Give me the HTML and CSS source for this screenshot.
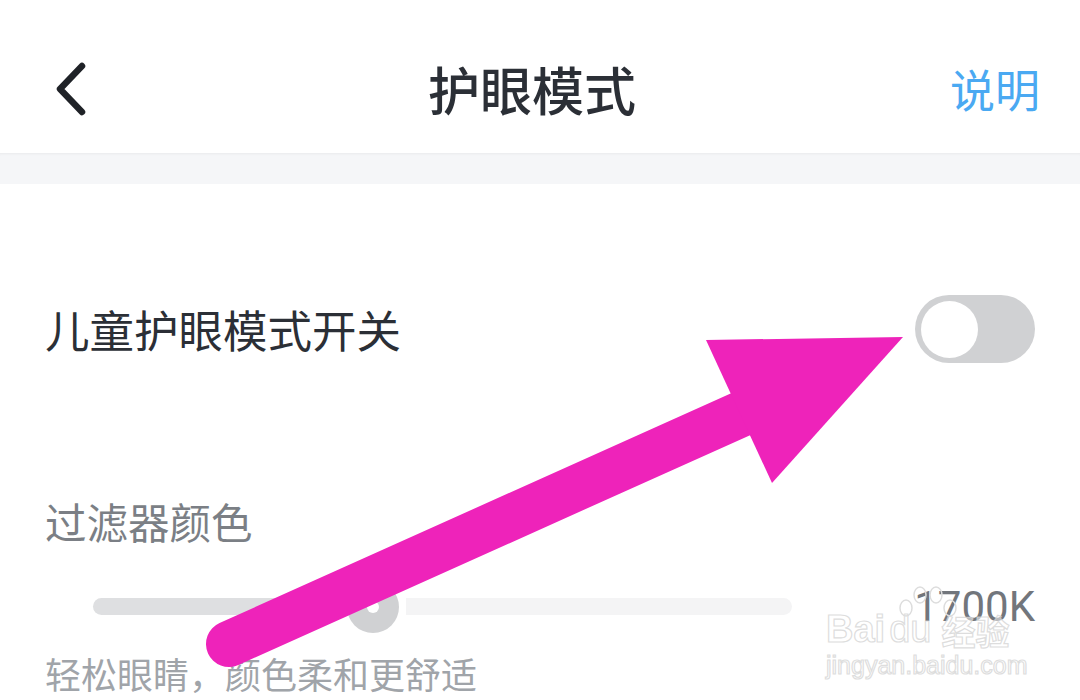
FILE: index.html
```html
<!DOCTYPE html>
<html lang="zh-CN">
<head>
    <meta charset="UTF-8">
    <title>护眼模式</title>
    <link rel="stylesheet" href="styles.css">
</head>
<body>
    <div class="page">
        <header class="top-bar">
            <div class="back">
                <svg width="40" height="56" viewBox="0 0 40 56">
                    <polyline points="32,5 10,28 32,51" fill="none" stroke="#1f2227" stroke-width="6.5" stroke-linecap="round" stroke-linejoin="round"/>
                </svg>
            </div>
            <h1 class="title">护眼模式</h1>
            <a class="help">说明</a>
        </header>
        <div class="divider"></div>

        <main class="content">
            <div class="switch-row">
                <span class="switch-label">儿童护眼模式开关</span>
                <div class="toggle"><div class="toggle-knob"></div></div>
            </div>

            <div class="filter-label">过滤器颜色</div>

            <div class="slider-row">
                <div class="slider">
                    <div class="slider-fill"></div>
                    <div class="slider-knob"></div>
                    <div class="slider-rest"></div>
                </div>
                <span class="slider-value">1700K</span>
            </div>

            <p class="hint">轻松眼睛，颜色柔和更舒适</p>
        </main>

        <div class="watermark">
            <div class="wm-main">
                <span>Bai</span>
                <span class="wm-paw">
                    <svg width="64" height="34" viewBox="0 0 64 34">
                        <ellipse cx="12" cy="22" rx="6" ry="8" fill="none" stroke="#dddddd" stroke-width="1.5"/>
                        <ellipse cx="26" cy="9" rx="6" ry="8" fill="none" stroke="#dddddd" stroke-width="1.5"/>
                        <ellipse cx="42" cy="9" rx="6" ry="8" fill="none" stroke="#dddddd" stroke-width="1.5"/>
                        <ellipse cx="56" cy="22" rx="6" ry="8" fill="none" stroke="#dddddd" stroke-width="1.5"/>
                    </svg>
                </span>
                <span class="wm-du">du</span>
                <span class="wm-cn">经验</span>
            </div>
            <div class="wm-url">jingyan.baidu.com</div>
        </div>

        <svg class="arrow" width="1080" height="700" viewBox="0 0 1080 700">
            <line x1="229" y1="644" x2="790" y2="392" stroke="#ee23ba" stroke-width="46" stroke-linecap="round"/>
            <polygon points="706,340 903,337 772,483" fill="#ee23ba"/>
        </svg>
    </div>
</body>
</html>
```

FILE: styles.css
```css
* {
    margin: 0;
    padding: 0;
    box-sizing: border-box;
}

body {
    font-family: "Noto Sans CJK SC", "Noto Sans", sans-serif;
    background-color: #ffffff;
    width: 1080px;
    height: 700px;
    overflow: hidden;
}

.page {
    position: relative;
    width: 1080px;
    height: 700px;
}

.top-bar {
    height: 153px;
    padding: 24px 40px 0 50px;
    display: flex;
    align-items: center;
    justify-content: space-between;
    background-color: #ffffff;
}

.back {
    width: 40px;
    height: 56px;
    display: flex;
}

.title {
    font-size: 52px;
    font-weight: 500;
    line-height: 1;
    color: #2b2f36;
    margin-left: 24px;
}

.help {
    font-size: 45px;
    line-height: 1;
    color: #4aa9f2;
}

.divider {
    height: 31px;
    background-color: #f5f6f8;
    box-shadow: inset 0 3px 3px -2px rgba(0, 0, 0, 0.05);
}

.content {
    padding: 111px 45px 0 45px;
}

.switch-row {
    display: flex;
    align-items: center;
    justify-content: space-between;
    height: 68px;
}

.switch-label {
    font-size: 44.5px;
    line-height: 1;
    color: #2b2f36;
}

.toggle {
    width: 120px;
    height: 68px;
    border-radius: 34px;
    background-color: #d0d1d3;
    padding: 6px;
}

.toggle-knob {
    width: 57px;
    height: 57px;
    border-radius: 50%;
    background-color: #ffffff;
}

.filter-label {
    margin-top: 138px;
    font-size: 41.5px;
    line-height: 1;
    color: #7b7f85;
}

.slider-row {
    margin-top: 38px;
    height: 52px;
    display: flex;
    align-items: center;
}

.slider {
    margin-left: 48px;
    width: 699px;
    display: flex;
    align-items: center;
}

.slider-fill {
    width: 254px;
    height: 17px;
    border-radius: 9px 0 0 9px;
    background-color: #dedfe1;
}

.slider-knob {
    width: 52px;
    height: 52px;
    border-radius: 50%;
    background-color: #d0d1d3;
    display: flex;
    align-items: center;
    justify-content: center;
}

.slider-knob::after {
    content: "";
    width: 12px;
    height: 12px;
    border-radius: 50%;
    background-color: #ffffff;
}

.slider-rest {
    flex: 1;
    margin-left: 7px;
    height: 17px;
    border-radius: 0 9px 9px 0;
    background-color: #f4f4f5;
}

.slider-value {
    margin-left: auto;
    font-family: Roboto, "Liberation Sans", sans-serif;
    font-size: 42px;
    line-height: 1;
    color: #72767c;
}

.hint {
    margin-top: 22px;
    font-size: 36px;
    line-height: 1;
    color: #a0a4a9;
}

.watermark {
    position: absolute;
    left: 826px;
    top: 586px;
    color: rgba(255, 255, 255, 0.5);
    -webkit-text-stroke: 1.2px rgba(210, 210, 210, 0.75);
    font-family: "Liberation Sans", sans-serif;
    font-weight: 700;
}

.wm-main {
    display: flex;
    align-items: flex-end;
    height: 62px;
    font-size: 38px;
    line-height: 1;
}

.wm-paw {
    position: absolute;
    left: 68px;
    top: 0;
}

.wm-du {
    margin-left: 4px;
    font-weight: 400;
}

.wm-cn {
    margin-left: 10px;
    font-family: "Noto Sans CJK SC", sans-serif;
    font-size: 34px;
}

.wm-url {
    font-size: 25px;
    font-weight: 400;
    line-height: 1;
    margin-top: 5px;
}

.arrow {
    position: absolute;
    left: 0;
    top: 0;
}
```
